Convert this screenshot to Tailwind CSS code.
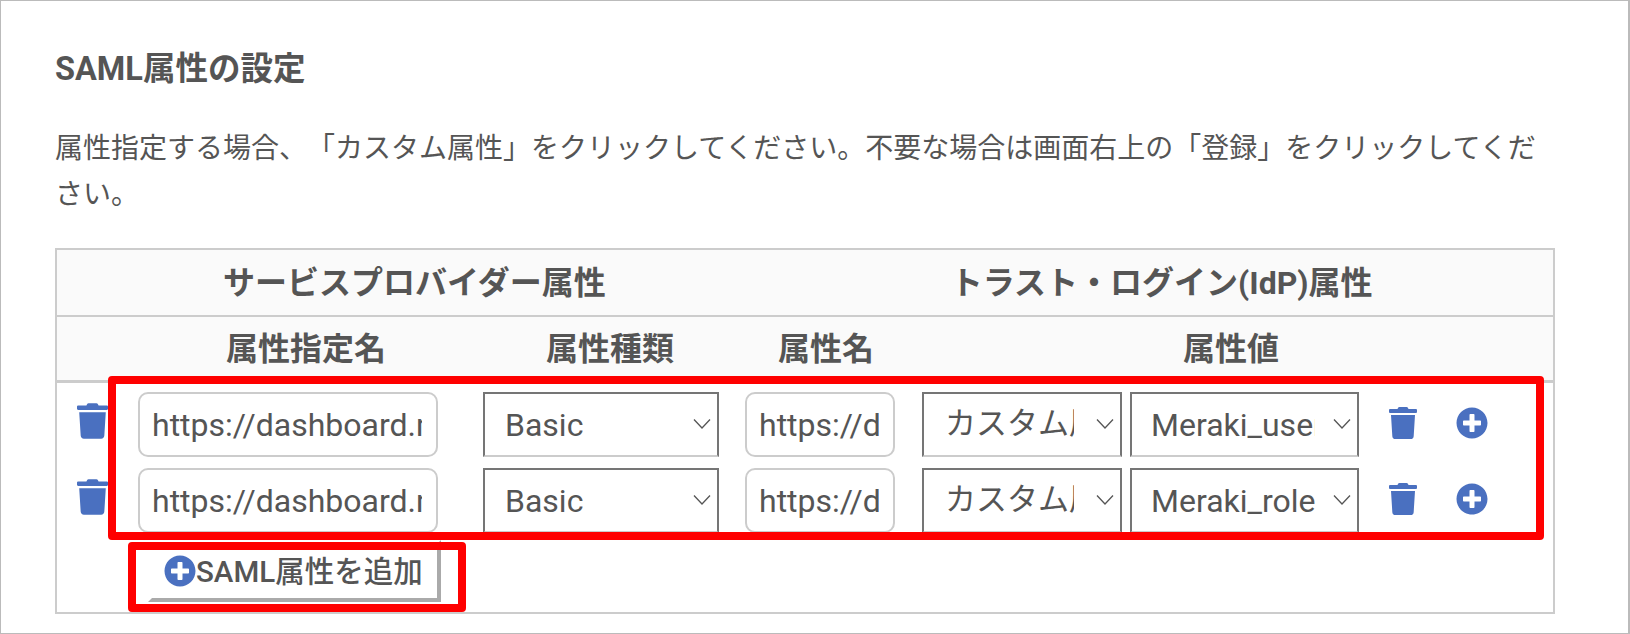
<!DOCTYPE html>
<html lang="ja">
<head>
<meta charset="UTF-8">
<title>SAML属性の設定</title>
<script src="https://cdn.jsdelivr.net/npm/@tailwindcss/browser@4"></script>
</head>
<body class="bg-white">
<div class="relative h-[634px] w-[1630px] overflow-hidden border border-r-2 border-[#bbbbbb] bg-white pl-[54px] pt-[46px] text-[#555555] font-['Roboto','Noto_Sans_CJK_JP',sans-serif] [text-spacing-trim:space-all]">
  <h2 class="text-[32.5px] leading-[44px] font-bold">SAML属性の設定</h2>
  <p class="mt-[35px] w-[1500px] text-[28px] leading-[46px]">属性指定する場合、「カスタム属性」をクリックしてください。不要な場合は画面右上の「登録」をクリックしてください。</p>

  <div class="mt-[30px] w-[1500px] h-[366px] border-2 border-[#cccccc]">
    <div class="flex h-[67px] items-center border-b-2 border-[#cccccc] bg-[#fafafa] text-[32px] font-bold">
      <div class="ml-[166px] whitespace-nowrap">サービスプロバイダー属性</div>
      <div class="ml-[345px] whitespace-nowrap">トラスト・ログイン(IdP)属性</div>
    </div>
    <div class="flex h-[66px] items-center border-b-[3px] border-[#cccccc] bg-[#fafafa] text-[32px] font-bold">
      <div class="ml-[169px]">属性指定名</div>
      <div class="ml-[160px]">属性種類</div>
      <div class="ml-[104px]">属性名</div>
      <div class="ml-[309px]">属性値</div>
    </div>

    <div class="flex flex-col gap-[11px] pt-[9px] text-[32px]">
      <div class="flex h-[65px]">
        <svg class="ml-[20px] mt-[11px] h-[36px] w-[31px] fill-[#4a70c0]" viewBox="0 0 448 512"><path d="M432 32H312l-9.4-18.7A24 24 0 0 0 281.1 0H166.8a23.72 23.72 0 0 0-21.4 13.3L136 32H16A16 16 0 0 0 0 48v32a16 16 0 0 0 16 16h416a16 16 0 0 0 16-16V48a16 16 0 0 0-16-16zM53.2 467a48 48 0 0 0 47.9 45h245.8a48 48 0 0 0 47.9-45L416 128H32z"/></svg>
        <input class="ml-[30px] h-[65px] w-[300px] rounded-[10px] border-2 border-[#cccccc] pl-[12px] pr-[14px] outline-none" value="https://dashboard.meraki.com/saml/username">
        <div class="relative ml-[45px] h-[65px] w-[236px]">
          <select class="h-full w-full appearance-none rounded-none border-2 border-[#757575] border-b-[#cccccc] bg-white pl-[20px] pr-[30px] outline-none"><option>Basic</option></select>
          <svg class="absolute right-[8px] top-[26px] h-[12px] w-[18px] stroke-[#555555]" viewBox="0 0 18 12" fill="none" stroke-width="1.3"><path d="M1 1.5l8 8.5 8-8.5"/></svg>
        </div>
        <input class="ml-[26px] h-[65px] w-[150px] rounded-[10px] border-2 border-[#cccccc] pl-[12px] pr-[14px] outline-none" value="https://dashboard.meraki.com">
        <div class="relative ml-[27px] h-[65px] w-[200px]">
          <select class="h-full w-full appearance-none rounded-none border-2 border-[#757575] border-b-[#cccccc] bg-white pl-[21px] pr-[46px] text-[31px] outline-none"><option>カスタム属性</option></select>
          <svg class="absolute right-[8px] top-[26px] h-[12px] w-[18px] stroke-[#555555]" viewBox="0 0 18 12" fill="none" stroke-width="1.3"><path d="M1 1.5l8 8.5 8-8.5"/></svg>
        </div>
        <div class="relative ml-[8px] h-[65px] w-[229px]">
          <select class="h-full w-full appearance-none rounded-none border-2 border-[#757575] border-b-[#cccccc] bg-white pl-[19px] pr-[42px] outline-none"><option>Meraki_username</option></select>
          <svg class="absolute right-[8px] top-[26px] h-[12px] w-[18px] stroke-[#555555]" viewBox="0 0 18 12" fill="none" stroke-width="1.3"><path d="M1 1.5l8 8.5 8-8.5"/></svg>
        </div>
        <svg class="ml-[30px] mt-[15px] h-[32px] w-[28px] fill-[#4a70c0]" viewBox="0 0 448 512"><path d="M432 32H312l-9.4-18.7A24 24 0 0 0 281.1 0H166.8a23.72 23.72 0 0 0-21.4 13.3L136 32H16A16 16 0 0 0 0 48v32a16 16 0 0 0 16 16h416a16 16 0 0 0 16-16V48a16 16 0 0 0-16-16zM53.2 467a48 48 0 0 0 47.9 45h245.8a48 48 0 0 0 47.9-45L416 128H32z"/></svg>
        <svg class="ml-[39px] mt-[15px] h-[32px] w-[32px] fill-[#4a70c0]" viewBox="0 0 512 512"><path d="M256 8C119 8 8 119 8 256s111 248 248 248 248-111 248-248S393 8 256 8zm144 276c0 6.6-5.4 12-12 12h-92v92c0 6.6-5.4 12-12 12h-56c-6.6 0-12-5.4-12-12v-92h-92c-6.6 0-12-5.4-12-12v-56c0-6.6 5.4-12 12-12h92v-92c0-6.6 5.4-12 12-12h56c6.6 0 12 5.4 12 12v92h92c6.6 0 12 5.4 12 12v56z"/></svg>
      </div>
      <div class="flex h-[65px]">
        <svg class="ml-[20px] mt-[11px] h-[36px] w-[31px] fill-[#4a70c0]" viewBox="0 0 448 512"><path d="M432 32H312l-9.4-18.7A24 24 0 0 0 281.1 0H166.8a23.72 23.72 0 0 0-21.4 13.3L136 32H16A16 16 0 0 0 0 48v32a16 16 0 0 0 16 16h416a16 16 0 0 0 16-16V48a16 16 0 0 0-16-16zM53.2 467a48 48 0 0 0 47.9 45h245.8a48 48 0 0 0 47.9-45L416 128H32z"/></svg>
        <input class="ml-[30px] h-[65px] w-[300px] rounded-[10px] border-2 border-[#cccccc] pl-[12px] pr-[14px] outline-none" value="https://dashboard.meraki.com/saml/role">
        <div class="relative ml-[45px] h-[65px] w-[236px]">
          <select class="h-full w-full appearance-none rounded-none border-2 border-[#757575] border-b-[#cccccc] bg-white pl-[20px] pr-[30px] outline-none"><option>Basic</option></select>
          <svg class="absolute right-[8px] top-[26px] h-[12px] w-[18px] stroke-[#555555]" viewBox="0 0 18 12" fill="none" stroke-width="1.3"><path d="M1 1.5l8 8.5 8-8.5"/></svg>
        </div>
        <input class="ml-[26px] h-[65px] w-[150px] rounded-[10px] border-2 border-[#cccccc] pl-[12px] pr-[14px] outline-none" value="https://dashboard.meraki.com">
        <div class="relative ml-[27px] h-[65px] w-[200px]">
          <select class="h-full w-full appearance-none rounded-none border-2 border-[#757575] border-b-[#cccccc] bg-white pl-[21px] pr-[46px] text-[31px] outline-none"><option>カスタム属性</option></select>
          <svg class="absolute right-[8px] top-[26px] h-[12px] w-[18px] stroke-[#555555]" viewBox="0 0 18 12" fill="none" stroke-width="1.3"><path d="M1 1.5l8 8.5 8-8.5"/></svg>
        </div>
        <div class="relative ml-[8px] h-[65px] w-[229px]">
          <select class="h-full w-full appearance-none rounded-none border-2 border-[#757575] border-b-[#cccccc] bg-white pl-[19px] pr-[42px] outline-none"><option>Meraki_role</option></select>
          <svg class="absolute right-[8px] top-[26px] h-[12px] w-[18px] stroke-[#555555]" viewBox="0 0 18 12" fill="none" stroke-width="1.3"><path d="M1 1.5l8 8.5 8-8.5"/></svg>
        </div>
        <svg class="ml-[30px] mt-[15px] h-[32px] w-[28px] fill-[#4a70c0]" viewBox="0 0 448 512"><path d="M432 32H312l-9.4-18.7A24 24 0 0 0 281.1 0H166.8a23.72 23.72 0 0 0-21.4 13.3L136 32H16A16 16 0 0 0 0 48v32a16 16 0 0 0 16 16h416a16 16 0 0 0 16-16V48a16 16 0 0 0-16-16zM53.2 467a48 48 0 0 0 47.9 45h245.8a48 48 0 0 0 47.9-45L416 128H32z"/></svg>
        <svg class="ml-[39px] mt-[15px] h-[32px] w-[32px] fill-[#4a70c0]" viewBox="0 0 512 512"><path d="M256 8C119 8 8 119 8 256s111 248 248 248 248-111 248-248S393 8 256 8zm144 276c0 6.6-5.4 12-12 12h-92v92c0 6.6-5.4 12-12 12h-56c-6.6 0-12-5.4-12-12v-92h-92c-6.6 0-12-5.4-12-12v-56c0-6.6 5.4-12 12-12h92v-92c0-6.6 5.4-12 12-12h56c6.6 0 12 5.4 12 12v92h92c6.6 0 12 5.4 12 12v56z"/></svg>
      </div>
    </div>

    <button class="ml-[91px] mt-[7px] flex h-[62px] w-[293px] items-center border-[4px] border-t-white border-l-white border-r-[#aaaaaa] border-b-[#aaaaaa] bg-white pl-[12px] text-[29.5px] leading-none font-medium">
      <svg class="h-[32px] w-[32px] shrink-0 fill-[#4a70c0]" viewBox="0 0 512 512"><path d="M256 8C119 8 8 119 8 256s111 248 248 248 248-111 248-248S393 8 256 8zm144 276c0 6.6-5.4 12-12 12h-92v92c0 6.6-5.4 12-12 12h-56c-6.6 0-12-5.4-12-12v-92h-92c-6.6 0-12-5.4-12-12v-56c0-6.6 5.4-12 12-12h92v-92c0-6.6 5.4-12 12-12h56c6.6 0 12 5.4 12 12v92h92c6.6 0 12 5.4 12 12v56z"/></svg>
      <span class="mt-[4px] whitespace-nowrap">SAML属性を追加</span>
    </button>
  </div>

  <div class="absolute left-[107px] top-[375px] h-[164px] w-[1436px] rounded-[4px] border-[8px] border-[#ff0000]"></div>
  <div class="absolute left-[127px] top-[541px] h-[70px] w-[338px] rounded-[4px] border-[8px] border-[#ff0000]"></div>
</div>
</body>
</html>
